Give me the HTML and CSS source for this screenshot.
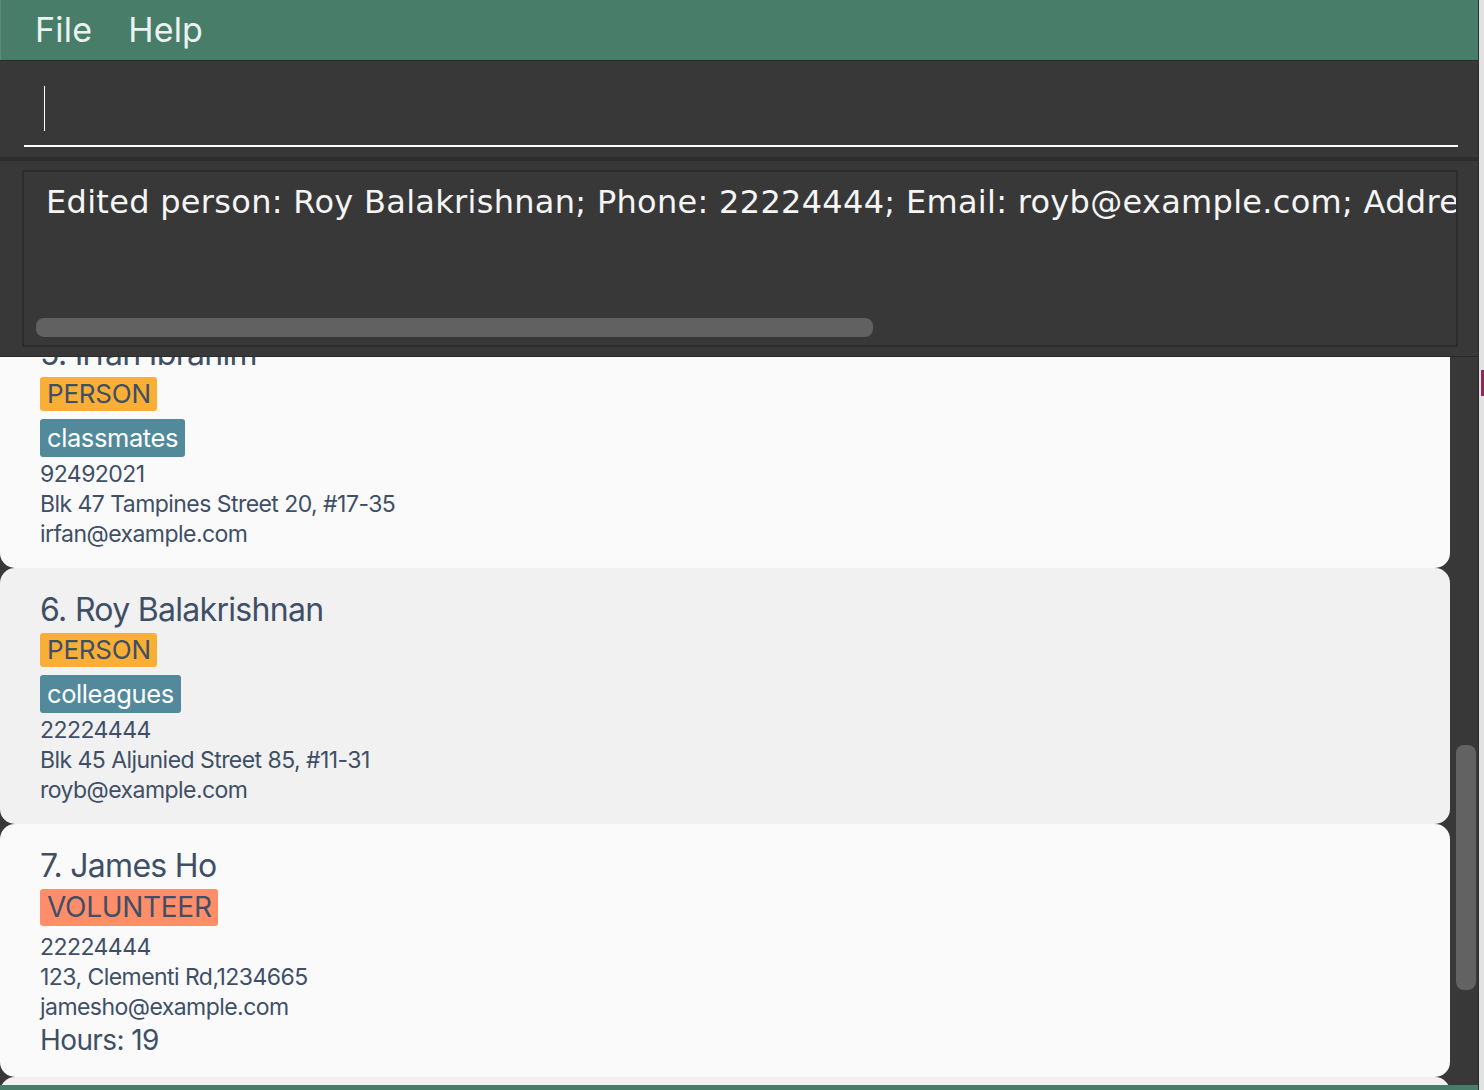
FILE: index.html
```html
<!DOCTYPE html>
<html>
<head>
<meta charset="utf-8">
<link rel="stylesheet" href="styles.css">
</head>
<body>
<div class="screen">
  <div class="app">
    <div class="menubar">
      <span class="menu-item">File</span>
      <span class="menu-item">Help</span>
    </div>
    <div class="command">
      <div class="field"><span class="caret"></span></div>
    </div>
    <div class="result">
      <div class="result-box">
        <div class="result-text">Edited person: Roy Balakrishnan; Phone: 22224444; Email: royb@example.com; Address: Blk 45 Aljunied Street 85, #11-31; Tags: [colleagues]</div>
        <div class="hscroll"><div class="hthumb"></div></div>
      </div>
    </div>
    <div class="list">
      <div class="list-viewport">
        <div class="list-inner">
          <div class="card card-light">
            <div class="name">5. Irfan Ibrahim</div>
            <div class="badges"><span class="badge badge-person">PERSON</span></div>
            <div class="tags"><span class="tag">classmates</span></div>
            <div class="info">92492021</div>
            <div class="info">Blk 47 Tampines Street 20, #17-35</div>
            <div class="info">irfan@example.com</div>
          </div>
          <div class="card card-dim">
            <div class="name">6. Roy Balakrishnan</div>
            <div class="badges"><span class="badge badge-person">PERSON</span></div>
            <div class="tags"><span class="tag">colleagues</span></div>
            <div class="info">22224444</div>
            <div class="info">Blk 45 Aljunied Street 85, #11-31</div>
            <div class="info">royb@example.com</div>
          </div>
          <div class="card card-light card-vol">
            <div class="name">7. James Ho</div>
            <div class="badges"><span class="badge badge-volunteer">VOLUNTEER</span></div>
            <div class="info">22224444</div>
            <div class="info">123, Clementi Rd,1234665</div>
            <div class="info">jamesho@example.com</div>
            <div class="hours">Hours: 19</div>
          </div>
          <div class="card card-dim">
            <div class="name">8. Next</div>
          </div>
        </div>
      </div>
      <div class="vscroll"><div class="vthumb"></div></div>
    </div>
    <div class="status"></div>
  </div>
  <div class="edge"><span class="edge-mark"></span></div>
</div>
</body>
</html>
```

FILE: styles.css
```css
* { box-sizing: border-box; }
html, body { margin: 0; padding: 0; }
body {
  width: 1484px;
  height: 1090px;
  overflow: hidden;
  background: #e4e4e4;
  font-family: Inter, "Open Sans", sans-serif;
}
.screen {
  display: flex;
  width: 1484px;
  height: 1090px;
}
.app {
  width: 1479px;
  height: 1090px;
  display: flex;
  flex-direction: column;
  background: #383838;
  border-right: 1px solid #2c2c2c;
}
.edge {
  flex: 1;
  background: #e2e2e2;
  padding-top: 370px;
  display: flex;
  justify-content: flex-end;
}
.edge-mark {
  width: 3px;
  height: 26px;
  background: #8e2a5a;
}
.menubar {
  height: 60px;
  flex: none;
  background: #487d6a;
  display: flex;
  align-items: center;
  padding-left: 34px;
  gap: 36px;
  border-left: 1px solid #5b8c7a;
}
.menu-item {
  color: #eaf3ef;
  font-size: 34px;
  font-weight: 400;
  letter-spacing: 0.2px;
  padding-bottom: 2px;
}
.command {
  height: 97px;
  flex: none;
  border-top: 1px solid #2a2a2a;
  padding: 0 20px 0 24px;
  background: #383838;
}
.field {
  height: 86px;
  border-bottom: 2px solid #ffffff;
  padding: 25px 0 0 20px;
  width: 1434px;
}
.caret {
  display: block;
  width: 1px;
  height: 45px;
  background: #ffffff;
}
.result {
  height: 200px;
  flex: none;
  border-top: 4px solid #2e2e2e;
  border-bottom: 1px solid #2a2a2a;
  padding: 9px 20px 9px 22px;
  background: #383838;
}
.result-box {
  height: 177px;
  width: 1436px;
  border: 2px solid #2c2c2c;
  overflow: hidden;
  display: flex;
  flex-direction: column;
  padding: 10px 0 0 22px;
}
.result-text {
  font-family: "DejaVu Sans", sans-serif;
  font-size: 32px;
  line-height: 40px;
  color: #f5f5f5;
  white-space: nowrap;
  letter-spacing: 0.3px;
}
.hscroll {
  margin-top: auto;
  margin-bottom: 8px;
  margin-left: -10px;
}
.hthumb {
  width: 837px;
  height: 19px;
  border-radius: 8px;
  background: #616161;
}
.list {
  flex: 1;
  display: flex;
  overflow: hidden;
  background: #383838;
}
.list-viewport {
  width: 1450px;
  overflow: hidden;
}
.list-inner {
  margin-top: -45px;
  display: flex;
  flex-direction: column;
}
.card {
  border-radius: 15px;
  padding: 24px 0 19px 40px;
  color: #3e4f66;
  display: flex;
  flex-direction: column;
  align-items: flex-start;
}
.card-light { background: #fafafa; }
.card-dim { background: #f1f1f1; }
.name {
  font-size: 32px;
  line-height: 36px;
  height: 36px;
  letter-spacing: -0.7px;
}
.badges { margin-top: 5px; display: flex; }
.badge {
  display: inline-block;
  border-radius: 3px;
  color: #3e4f66;
  padding: 0 6px 0 7px;
}
.badge-person {
  background: #f9ae35;
  font-size: 26px;
  height: 34px;
  line-height: 34px;
  letter-spacing: -0.2px;
}
.badge-volunteer {
  background: #fe8d69;
  font-size: 28px;
  height: 37px;
  line-height: 37px;
  letter-spacing: -0.3px;
}
.tags { margin-top: 8px; display: flex; }
.tag {
  display: inline-block;
  background: #52899b;
  color: #ffffff;
  font-size: 25.5px;
  height: 38px;
  line-height: 38px;
  padding: 0 7px;
  border-radius: 3px;
  letter-spacing: -0.4px;
}
.tags + .info { margin-top: 2px; }
.badges + .info { margin-top: 6px; }
.info {
  font-size: 23px;
  line-height: 30px;
  height: 30px;
  letter-spacing: -0.55px;
}
.hours {
  font-size: 28px;
  line-height: 36px;
  height: 36px;
  letter-spacing: -0.6px;
}
.vscroll {
  width: 28px;
  padding: 388px 0 0 6px;
}
.vthumb {
  width: 20px;
  height: 245px;
  border-radius: 8px;
  background: #626262;
}
.status {
  height: 5px;
  background: #487d6a;
  flex: none;
}
```
